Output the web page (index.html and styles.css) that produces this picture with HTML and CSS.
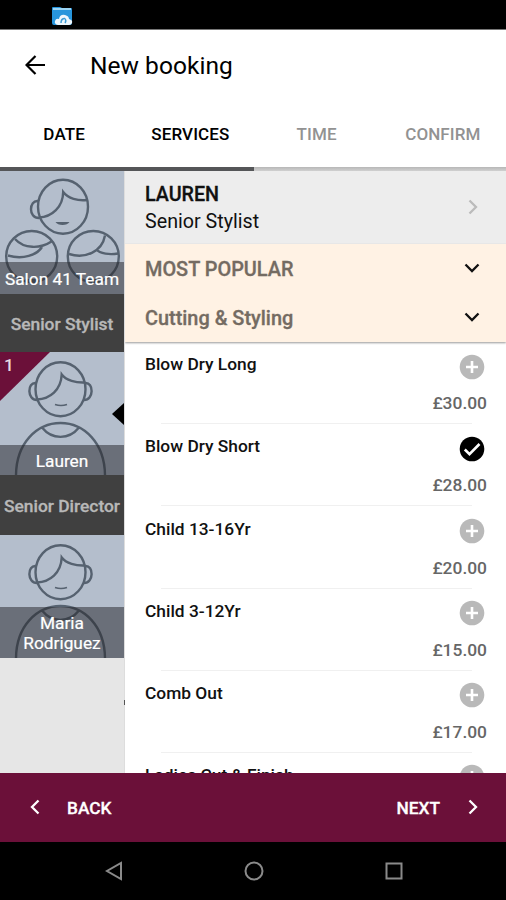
FILE: index.html
```
<!DOCTYPE html>
<html lang="en">
<head>
<meta charset="utf-8">
<title>New booking</title>
<link rel="stylesheet" href="styles.css">
</head>
<body>
<svg width="0" height="0" class="defs">
  <symbol id="person" viewBox="0 0 124 123">
    <g fill="none" stroke="#566270" stroke-width="2.4">
      <ellipse cx="60.5" cy="37.2" rx="25" ry="27"/>
      <path d="M36 31c-9-1-9 17 1 17M85 31c9-1 9 17-1 17"/>
      <path d="M37 47.500C50 47 61 38 61.700 22.500C66 28.500 76 31 85 30.500"/>
      <path d="M16 124C16 91 37 71 60.500 71S105 91 105 124M42 75.500C52 88 69 88 79 75.500"/>
      <path d="M55 52.500q6 2 12 0" stroke-width="1.700"/>
    </g>
  </symbol>
  <symbol id="plus" viewBox="0 0 26 26"><circle cx="13" cy="13" r="12.300" fill="#b9b9b9"/><path d="M13 7v12M7 13h12" stroke="#fff" stroke-width="2.600"/></symbol>
  <symbol id="check" viewBox="0 0 26 26"><circle cx="13" cy="13" r="12.300"/><path d="M5.800 13.500l4.700 4.700L20.500 8" fill="none" stroke="#fff" stroke-width="2.600"/></symbol>
  <symbol id="down" viewBox="0 0 16 10"><path d="M1.500 1.500L8 8l6.500-6.500" fill="none" stroke="#111" stroke-width="2.300"/></symbol>
  <symbol id="right" viewBox="0 0 10 16"><path d="M1.500 1.500L8 8l-6.500 6.500" fill="none" stroke="currentColor" stroke-width="2.300"/></symbol>
</svg>
<div class="status">
  <svg width="22" height="20" viewBox="0 0 22 20"><path d="M1 2q0-1 1-1h7l2 1h9q1 0 1 1v14q0 2-2 2H3q-2 0-2-2z" fill="#2795dc"/><path d="M2 2h18v2H2z" fill="#9bd4f4"/><path d="M7 19q-4-1-3-4 1-3 4-2 1-5 6-4 4 1 4 4 4 1 3 4-1 2-3 2z" fill="#edf6fc"/><path d="M10 17q0-4 3-4.500M13 12q3 2 1 5" fill="none" stroke="#3c9bd5" stroke-width="1.500"/></svg>
</div>
<header class="appbar">
  <div class="title-row">
    <svg width="20" height="20" viewBox="0 0 20 20" fill="none" stroke="#000" stroke-width="2.200"><path d="M20 10H2M10.500 1L1.500 10l9 9"/></svg>
    <h1>New booking</h1>
  </div>
  <nav class="tabs"><span>DATE</span><span>SERVICES</span><span class="off">TIME</span><span class="off">CONFIRM</span></nav>
  <div class="progress"><div></div></div>
</header>
<div class="content">
  <aside class="staff">
    <div class="card">
      <svg class="art" viewBox="0 0 124 123">
        <g fill="none" stroke="#566270" stroke-width="2.400">
          <ellipse cx="63" cy="35.700" rx="25" ry="27"/>
          <path d="M38 30c-9-1-10 17 1 17M39 46.500C52 46 63 36 63.200 21C68 27.500 78 30 87 29"/>
          <circle cx="31.700" cy="85.500" r="25.500"/>
          <path d="M15 68C24 78 40 78 51.500 70.500M8 84.500C23 89 37 84 42 76"/>
          <circle cx="93.300" cy="85.500" r="25.500"/>
          <path d="M69 83C85 88 102 81 105 64.500M96 78C100 83 110 84 118 82.500"/>
        </g>
        <path d="M55.500 51h14q-2 3-7 3t-7-3M25 108h13q-2 4-6.500 4t-6.500-4M87 108h13q-2 4-6.500 4t-6.500-4" fill="#566270"/>
      </svg>
      <div class="label team">Salon 41 Team</div>
    </div>
    <div class="role">Senior Stylist</div>
    <div class="card">
      <svg class="art"><use href="#person"/></svg>
      <svg class="corner" width="50" height="49" viewBox="0 0 50 49"><path d="M0 0h50L0 49z" fill="#6b1039"/></svg>
      <span class="count">1</span>
      <svg class="pointer" width="12" height="22" viewBox="0 0 12 22"><path d="M12 0L0 11l12 11z"/></svg>
      <div class="label lauren">Lauren</div>
    </div>
    <div class="role director">Senior Director</div>
    <div class="card">
      <svg class="art"><use href="#person"/></svg>
      <div class="label maria">Maria<br>Rodriguez</div>
    </div>
    <i class="tick"></i>
  </aside>
  <main>
    <section class="provider">
      <div><strong>LAUREN</strong><p>Senior Stylist</p></div>
      <svg width="10" height="16"><use href="#right"/></svg>
    </section>
    <section class="cats">
      <div><span>MOST POPULAR</span><svg width="16" height="10"><use href="#down"/></svg></div>
      <div><span>Cutting &amp; Styling</span><svg width="16" height="10"><use href="#down"/></svg></div>
    </section>
    <section class="items">
      <article><h2>Blow Dry Long</h2><svg><use href="#plus"/></svg><b>£30.00</b></article>
      <article><h2>Blow Dry Short</h2><svg><use href="#check"/></svg><b>£28.00</b></article>
      <article><h2>Child 13-16Yr</h2><svg><use href="#plus"/></svg><b>£20.00</b></article>
      <article><h2>Child 3-12Yr</h2><svg><use href="#plus"/></svg><b>£15.00</b></article>
      <article><h2>Comb Out</h2><svg><use href="#plus"/></svg><b>£17.00</b></article>
      <article><h2>Ladies Cut &amp; Finish</h2><svg><use href="#plus"/></svg></article>
    </section>
  </main>
</div>
<footer class="actions">
  <div><svg class="flip" width="10" height="16"><use href="#right"/></svg><span>BACK</span></div>
  <div><span>NEXT</span><svg width="10" height="16"><use href="#right"/></svg></div>
</footer>
<div class="sysnav">
  <svg width="18" height="20" viewBox="0 0 18 20"><path d="M16 2v16L2 10z"/></svg>
  <svg width="20" height="20" viewBox="0 0 20 20"><circle cx="10" cy="10" r="8.500"/></svg>
  <svg width="18" height="18" viewBox="0 0 18 18"><path d="M1.500 1.500h15v15h-15z"/></svg>
</div>
</body>
</html>
```
FILE: styles.css
```
* { box-sizing: border-box; margin: 0; }
body { width: 506px; height: 900px; overflow: hidden; display: flex; flex-direction: column; font-family: Roboto, sans-serif; background: #fff; color: #111; }
svg { display: block; flex: none; }
.defs { position: absolute; }
.status { height: 30px; background: #000; border-bottom: 1px solid #777; padding: 6px 0 0 51px; }
.appbar { height: 141px; display: flex; flex-direction: column; }
.title-row { height: 70px; display: flex; align-items: center; padding-left: 25px; gap: 45px; }
h1 { font-size: 24.5px; font-weight: 400; letter-spacing: .04px; line-height: 30px; margin-top: 2px; color: #000; }
.tabs { height: 67px; display: grid; grid-template-columns: repeat(4, 1fr); align-items: center; text-align: center; font-size: 17px; font-weight: 500; letter-spacing: .1px; padding-left: 1px; color: #000; }
.off { color: #929292; }
.progress { height: 4px; background: linear-gradient(#b7b7b7, #d0d0d0); }
.progress div { width: 254px; height: 4px; background: #555658; }
.content { height: 602px; display: flex; overflow: hidden; }
.staff { width: 125px; position: relative; background: #e6e6e6; border-right: 1px solid #ddd; }
.card { height: 123px; position: relative; display: flex; align-items: flex-end; background: #b4becc; overflow: hidden; }
.art { position: absolute; left: 0; top: 0; width: 124px; height: 123px; }
.label { position: relative; width: 100%; background: rgba(38, 38, 44, .52); color: #fff; text-align: center; font-size: 17.300px; line-height: 20px; -webkit-text-stroke: .2px #fff; }
.team { height: 32px; padding-top: 7px; white-space: nowrap; }
.lauren { height: 30px; padding-top: 6px; }
.maria { height: 51px; padding-top: 6px; }
.role { height: 58px; background: #404040; color: #b8b8b8; font-size: 17.400px; font-weight: 500; line-height: 60px; text-align: center; white-space: nowrap; -webkit-text-stroke: .3px #b8b8b8; }
.director { height: 60px; line-height: 62px; }
.corner { position: absolute; left: 0; top: 0; }
.count { position: absolute; left: 4px; top: 2px; font-size: 17.300px; font-weight: 500; line-height: 22px; color: #e8dce2; }
.pointer { position: absolute; right: 0; top: 51px; }
.tick { position: absolute; right: -1px; top: 529px; width: 1px; height: 5px; background: #555; }
main { flex: 1; overflow: hidden; }
.provider { height: 73px; background: #ededed; display: flex; justify-content: space-between; align-items: center; padding: 0 28px 0 20px; color: #bbb; }
.provider svg { margin-top: -2px; }
.provider div { color: #111; line-height: 27px; font-size: 19.700px; }
.provider strong { font-weight: 500; -webkit-text-stroke: .3px #111; }
.cats { height: 98px; background: #fff2e4; box-shadow: 0 1px 2px #999; color: #746b62; font-size: 19.900px; font-weight: 500; position: relative; }
.cats div { height: 49px; display: flex; align-items: center; justify-content: space-between; padding: 0 26px 0 20px; }
.cats span { padding-top: 2px; -webkit-text-stroke: .3px #746b62; }
.cats svg { margin-top: -2px; }
.items article { height: 82.200px; display: grid; grid-template-columns: 1fr 26px; grid-template-rows: 37px 44px; padding: 0 21px 0 20px; position: relative; }
.items article::after { content: ""; position: absolute; bottom: 0; left: 36px; right: 34px; height: 1px; background: #f0f0f0; }
.items svg { width: 26px; height: 26px; margin-top: 11.500px; }
h2 { font-size: 17.350px; font-weight: 500; line-height: 20px; margin-top: 12.300px; }
.items b { grid-column: 1 / 3; justify-self: end; margin-right: -2px; font-size: 17.400px; font-weight: 500; color: #666; line-height: 20px; margin-top: 14.300px; }
.actions { height: 69px; background: #6b1039; color: #fff; display: flex; align-items: center; justify-content: space-between; padding: 0 28.500px 0 29.500px; font-size: 17.300px; font-weight: 500; -webkit-text-stroke: .3px #fff; }
.actions div { display: flex; align-items: center; gap: 27.500px; }
.actions svg { margin-top: -1px; }
.flip { transform: scaleX(-1); }
.sysnav { height: 58px; background: #000; display: flex; align-items: center; justify-content: space-between; padding: 0 103.500px 0 104.500px; }
.sysnav svg { fill: none; stroke: #8a8a8a; stroke-width: 2px; }
```
